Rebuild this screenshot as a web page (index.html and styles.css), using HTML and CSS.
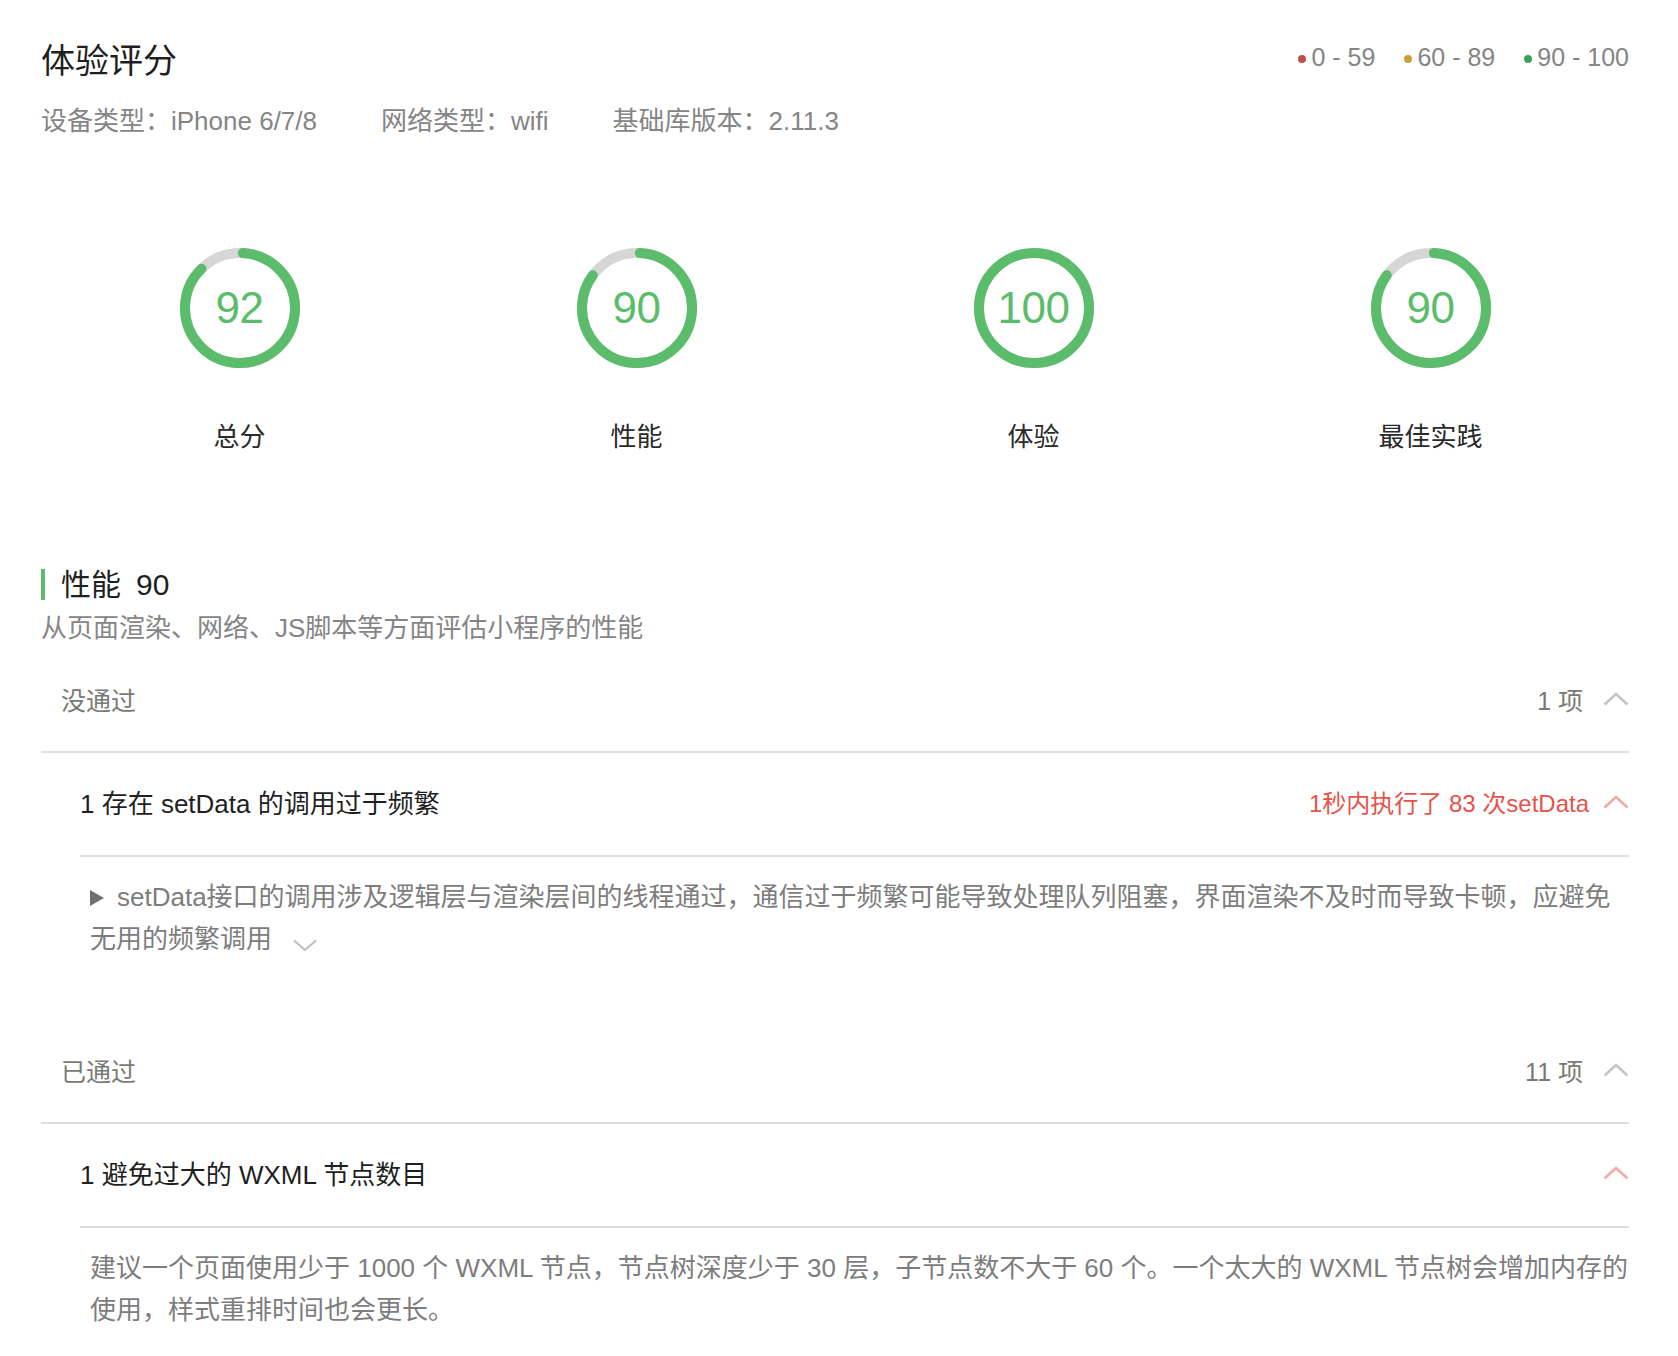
FILE: index.html
```html
<!DOCTYPE html>
<html lang="zh-CN">
<head>
<meta charset="utf-8">
<title>体验评分</title>
<link rel="stylesheet" href="styles.css">
</head>
<body>
<div class="page">
  <div class="top">
    <h1 class="title">体验评分</h1>
    <div class="legend">
      <span class="legend-item"><i class="dot dot-red"></i>0 - 59</span>
      <span class="legend-item"><i class="dot dot-gold"></i>60 - 89</span>
      <span class="legend-item"><i class="dot dot-green"></i>90 - 100</span>
    </div>
  </div>
  <div class="meta">
    <span class="meta-item">设备类型：iPhone 6/7/8</span>
    <span class="meta-item">网络类型：wifi</span>
    <span class="meta-item">基础库版本：2.11.3</span>
  </div>

  <div class="scores">
    <div class="score">
      <div class="gauge">
        <svg viewBox="0 0 120 120" width="120" height="120">
          <circle class="track" cx="60" cy="60" r="55"/>
          <circle class="arc" cx="60" cy="60" r="55" style="stroke-dasharray: 299.6 345.6"/>
        </svg>
        <span class="num">92</span>
      </div>
      <div class="label">总分</div>
    </div>
    <div class="score">
      <div class="gauge">
        <svg viewBox="0 0 120 120" width="120" height="120">
          <circle class="track" cx="60" cy="60" r="55"/>
          <circle class="arc" cx="60" cy="60" r="55" style="stroke-dasharray: 290.9 345.6"/>
        </svg>
        <span class="num">90</span>
      </div>
      <div class="label">性能</div>
    </div>
    <div class="score">
      <div class="gauge">
        <svg viewBox="0 0 120 120" width="120" height="120">
          <circle class="track" cx="60" cy="60" r="55"/>
          <circle class="arc full" cx="60" cy="60" r="55"/>
        </svg>
        <span class="num">100</span>
      </div>
      <div class="label">体验</div>
    </div>
    <div class="score">
      <div class="gauge">
        <svg viewBox="0 0 120 120" width="120" height="120">
          <circle class="track" cx="60" cy="60" r="55"/>
          <circle class="arc" cx="60" cy="60" r="55" style="stroke-dasharray: 290.9 345.6"/>
        </svg>
        <span class="num">90</span>
      </div>
      <div class="label">最佳实践</div>
    </div>
  </div>

  <div class="section">
    <h2 class="section-title">性能<span class="section-score">90</span></h2>
    <p class="section-desc">从页面渲染、网络、JS脚本等方面评估小程序的性能</p>

    <div class="group">
      <div class="group-head">
        <span class="group-name">没通过</span>
        <span class="group-count">1 项
          <svg class="chev" viewBox="0 0 26 14" width="26" height="14"><path d="M1.5 12.5 L13 2 L24.5 12.5"/></svg>
        </span>
      </div>
      <div class="item">
        <div class="item-head">
          <span class="item-name">1 存在 setData 的调用过于频繁</span>
          <span class="item-stat">1秒内执行了 83 次setData
            <svg class="chev chev-red" viewBox="0 0 26 14" width="26" height="14"><path d="M1.5 12.5 L13 2 L24.5 12.5"/></svg>
          </span>
        </div>
        <p class="item-desc"><i class="tri"></i>setData接口的调用涉及逻辑层与渲染层间的线程通过，通信过于频繁可能导致处理队列阻塞，界面渲染不及时而导致卡顿，应避免无用的频繁调用<svg class="chev-down" viewBox="0 0 26 14" width="26" height="14"><path d="M2 2.5 L13 12 L24 2.5"/></svg></p>
      </div>
    </div>

    <div class="group">
      <div class="group-head">
        <span class="group-name">已通过</span>
        <span class="group-count">11 项
          <svg class="chev" viewBox="0 0 26 14" width="26" height="14"><path d="M1.5 12.5 L13 2 L24.5 12.5"/></svg>
        </span>
      </div>
      <div class="item">
        <div class="item-head">
          <span class="item-name">1 避免过大的 WXML 节点数目</span>
          <span class="item-stat">
            <svg class="chev chev-red" viewBox="0 0 26 14" width="26" height="14"><path d="M1.5 12.5 L13 2 L24.5 12.5"/></svg>
          </span>
        </div>
        <p class="item-desc plain">建议一个页面使用少于 1000 个 WXML 节点，节点树深度少于 30 层，子节点数不大于 60 个。一个太大的 WXML 节点树会增加内存的使用，样式重排时间也会更长。</p>
      </div>
    </div>
  </div>
</div>
</body>
</html>
```

FILE: styles.css
```css
* { box-sizing: border-box; }
html, body { margin: 0; padding: 0; background: #fff; }
body {
  font-family: "Liberation Sans", "Noto Sans CJK SC", sans-serif;
  color: #222;
}
.page {
  padding: 0 49px 40px 41px;
}
.top {
  display: flex;
  justify-content: space-between;
  align-items: flex-start;
  padding-top: 39px;
}
.title {
  margin: 0;
  font-size: 34px;
  line-height: 44px;
  font-weight: normal;
  color: #1f1f1f;
}
.legend {
  display: flex;
  gap: 29px;
  margin-top: 2px;
  font-size: 25px;
  line-height: 32px;
  color: #858585;
}
.legend-item { display: flex; align-items: center; }
.dot {
  display: inline-block;
  width: 8px;
  height: 8px;
  border-radius: 50%;
  margin-right: 5px;
  margin-top: 3px;
}
.dot-red { background: #b9504a; }
.dot-gold { background: #c8a136; }
.dot-green { background: #3d9f5a; }

.meta {
  display: flex;
  gap: 64px;
  margin-top: 20px;
  font-size: 26px;
  line-height: 36px;
  color: #858585;
}

.scores {
  display: grid;
  grid-template-columns: repeat(4, 1fr);
  margin-top: 109px;
}
.score {
  display: flex;
  flex-direction: column;
  align-items: center;
}
.gauge {
  position: relative;
  width: 120px;
  height: 120px;
}
.gauge svg {
  display: block;
  transform: rotate(-90deg);
}
.track {
  fill: none;
  stroke: #d6d6d6;
  stroke-width: 10;
}
.arc {
  fill: none;
  stroke: #5bbd6b;
  stroke-width: 10;
  stroke-linecap: round;
  transform: rotate(3deg);
  transform-origin: 60px 60px;
}
.arc.full { transform: none; stroke-linecap: butt; }
.num {
  position: absolute;
  inset: 0;
  display: flex;
  align-items: center;
  justify-content: center;
  font-size: 44px;
  color: #5bbd6b;
  letter-spacing: -0.5px;
}
.label {
  margin-top: 51px;
  font-size: 26px;
  line-height: 36px;
  color: #2a2a2a;
}

.section { margin-top: 114px; }
.section-title {
  margin: 0;
  border-left: 4px solid #5bbd6b;
  padding-left: 16px;
  font-size: 30px;
  line-height: 31px;
  font-weight: normal;
  color: #1f1f1f;
}
.section-score { margin-left: 15px; }
.section-desc {
  margin: 10px 0 0;
  font-size: 26px;
  line-height: 36px;
  color: #858585;
}

.group-head {
  display: flex;
  justify-content: space-between;
  align-items: center;
  height: 107px;
  padding-left: 20px;
  border-bottom: 2px solid #dedede;
  font-size: 25px;
  color: #7a7a74;
}
.group-count {
  display: flex;
  align-items: center;
  gap: 20px;
}
.chev {
  display: block;
  fill: none;
  stroke: #c4c4c4;
  stroke-width: 2.6;
}
.chev-red { stroke: #f4aaa6; }

.item { margin-left: 39px; }
.item-head {
  display: flex;
  justify-content: space-between;
  align-items: center;
  height: 104px;
  padding-bottom: 5px;
  border-bottom: 2px solid #dedede;
}
.item-name {
  font-size: 26px;
  color: #1f1f1f;
}
.item-stat {
  display: flex;
  align-items: center;
  gap: 14px;
  font-size: 24px;
  color: #e5534b;
}
.item-desc {
  margin: 0;
  padding: 19px 0 57px 10px;
  font-size: 26px;
  line-height: 42px;
  color: #7d7d7d;
}
.item-desc.plain { padding-bottom: 40px; }
.tri {
  display: inline-block;
  width: 0;
  height: 0;
  border-left: 14px solid #707070;
  border-top: 8px solid transparent;
  border-bottom: 8px solid transparent;
  margin-right: 13px;
  vertical-align: 0px;
}
.chev-down {
  display: inline-block;
  margin-left: 20px;
  vertical-align: -4px;
  fill: none;
  stroke: #bdbdbd;
  stroke-width: 2;
}
```
